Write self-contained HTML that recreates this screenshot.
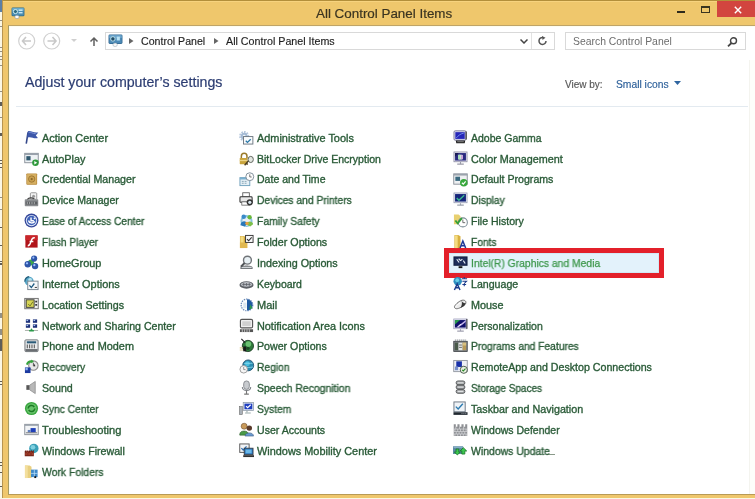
<!DOCTYPE html>
<html><head><meta charset="utf-8"><style>
*{margin:0;padding:0;box-sizing:border-box}
html,body{width:755px;height:499px;overflow:hidden;background:#fbf7e4;font-family:"Liberation Sans",sans-serif}
.a,.it{will-change:transform}
.a{position:absolute}
#frame{position:absolute;left:2px;top:0;width:760px;height:498px;background:#efc76c;border-left:1px solid #b8954f;border-top:1px solid #b38f3a}
#content{position:absolute;left:8px;top:25px;width:760px;height:470px;background:#fff;border-left:1px solid #a59a62;border-top:1px solid #bfa468;border-bottom:1px solid #b89a55}
.it{position:absolute;font-size:10.5px;line-height:12px;color:#27542f;white-space:nowrap;-webkit-text-stroke:0.35px #2f6240}
.hl{color:#3a9448;-webkit-text-stroke:0.25px #3f9a4c}
.ic{position:absolute;overflow:visible}
</style></head><body>
<div id="frame"></div><div class="a" style="left:3px;top:1px;width:752px;height:1px;background:#f7d37e"></div>
<div class="a" style="left:0;top:0;width:2px;height:12px;background:#5b7fa6"></div>
<div class="a" style="left:0px;top:20px;width:2px;height:1px;background:#2a2a2a;opacity:.5"></div><div class="a" style="left:0px;top:25.5px;width:2px;height:1px;background:#2a2a2a;opacity:.5"></div><div class="a" style="left:0px;top:47px;width:2px;height:1px;background:#2a2a2a;opacity:.5"></div><div class="a" style="left:0px;top:50.5px;width:2px;height:1px;background:#2a2a2a;opacity:.5"></div><div class="a" style="left:0px;top:55.5px;width:2px;height:1px;background:#2a2a2a;opacity:.5"></div><div class="a" style="left:0px;top:58.5px;width:2px;height:1px;background:#2a2a2a;opacity:.5"></div><div class="a" style="left:0px;top:64.5px;width:2px;height:1px;background:#2a2a2a;opacity:.5"></div><div class="a" style="left:0px;top:91px;width:2px;height:1px;background:#2a2a2a;opacity:.5"></div><div class="a" style="left:0px;top:102px;width:2px;height:4px;background:#2a2a2a;opacity:.75"></div><div class="a" style="left:0px;top:117px;width:2px;height:1px;background:#2a2a2a;opacity:.5"></div><div class="a" style="left:0px;top:133px;width:2px;height:3px;background:#2a2a2a;opacity:.75"></div><div class="a" style="left:0px;top:160px;width:2px;height:1px;background:#2a2a2a;opacity:.75"></div><div class="a" style="left:0px;top:163px;width:2px;height:1px;background:#2a2a2a;opacity:.75"></div><div class="a" style="left:0px;top:167px;width:2px;height:1px;background:#2a2a2a;opacity:.75"></div><div class="a" style="left:0px;top:197px;width:2px;height:1px;background:#2a2a2a;opacity:.5"></div><div class="a" style="left:0px;top:209px;width:2px;height:1px;background:#2a2a2a;opacity:.5"></div><div class="a" style="left:0px;top:227px;width:2px;height:1px;background:#2a2a2a;opacity:.75"></div><div class="a" style="left:0px;top:244.5px;width:2px;height:1px;background:#2a2a2a;opacity:.75"></div><div class="a" style="left:0px;top:261px;width:2px;height:1px;background:#2a2a2a;opacity:.75"></div><div class="a" style="left:0px;top:262.7px;width:2px;height:1px;background:#2a2a2a;opacity:.75"></div><div class="a" style="left:0px;top:264.3px;width:2px;height:1px;background:#2a2a2a;opacity:.75"></div><div class="a" style="left:0px;top:312.5px;width:2px;height:5px;background:#2a2a2a;opacity:.5"></div><div class="a" style="left:0px;top:329px;width:2px;height:6px;background:#2a2a2a;opacity:.5"></div><div class="a" style="left:0px;top:339px;width:2px;height:12px;background:#2a2a2a;opacity:.75"></div><div class="a" style="left:0px;top:381px;width:2px;height:1px;background:#2a2a2a;opacity:.75"></div><div class="a" style="left:0px;top:384px;width:2px;height:1px;background:#2a2a2a;opacity:.75"></div><div class="a" style="left:0px;top:462px;width:2px;height:1px;background:#2a2a2a;opacity:.75"></div><div class="a" style="left:0px;top:465px;width:2px;height:1px;background:#2a2a2a;opacity:.75"></div><div class="a" style="left:0px;top:471.5px;width:2px;height:1px;background:#2a2a2a;opacity:.75"></div><div class="a" style="left:0px;top:485.5px;width:2px;height:1px;background:#2a2a2a;opacity:.75"></div>
<!-- title bar -->
<svg class="a" style="left:11px;top:7px" width="14" height="12" viewBox="0 0 16 14"><rect x="0.5" y="0.5" width="15" height="10.2" rx="1.5" fill="#2f6a88"/><rect x="1.3" y="1.3" width="13.4" height="8.6" rx="0.8" fill="#4a8eb4"/><rect x="1.3" y="1.3" width="13.4" height="3" fill="#6aaccc"/><circle cx="5" cy="5.3" r="2.4" fill="#2a6a80" stroke="#d4f0f4" stroke-width="1.1"/><rect x="8.8" y="3" width="4.5" height="1.4" fill="#e0f6fc"/><rect x="8.8" y="6" width="4.5" height="1.4" fill="#e0f6fc"/><ellipse cx="6.8" cy="11.6" rx="2.6" ry="2" fill="#fafafa" stroke="#7a8a96" stroke-width="0.6"/></svg>
<div class="a" style="left:315.5px;top:5.8px;font-size:13.4px;line-height:16px;color:#3b3420;white-space:nowrap;-webkit-text-stroke:0.2px #3b3420">All Control Panel Items</div>
<div class="a" style="left:677px;top:11px;width:8px;height:1.6px;background:#2e2a1c"></div>
<div class="a" style="left:701px;top:6px;width:9px;height:7px;border:1px solid #3a3420;border-top-width:2px"></div>
<div class="a" style="left:717px;top:1px;width:45px;height:16px;background:#d2453f"></div>
<svg class="a" style="left:733.5px;top:6px" width="8" height="8" viewBox="0 0 8 8"><path d="M0.8 0.8L7.2 7.2M7.2 0.8L0.8 7.2" stroke="#fff" stroke-width="1.4"/></svg>
<div id="content"></div><div class="a" style="left:9px;top:26px;width:746px;height:1px;background:#fdfdf0"></div><div class="a" style="left:9px;top:26px;width:1px;height:467px;background:#fcfdf2"></div>
<!-- nav -->
<svg class="a" style="left:18px;top:32px" width="18" height="18" viewBox="0 0 18 18"><circle cx="8.7" cy="9" r="8" fill="none" stroke="#d0d0d0" stroke-width="1.2"/><path d="M4.5 9H13M8 5L4.5 9L8 13" fill="none" stroke="#c8c8c8" stroke-width="1.6"/></svg>
<svg class="a" style="left:43px;top:32px" width="18" height="18" viewBox="0 0 18 18"><circle cx="8.7" cy="9" r="8" fill="none" stroke="#d0d0d0" stroke-width="1.2"/><path d="M4.5 9H13M9.5 5L13 9L9.5 13" fill="none" stroke="#c8c8c8" stroke-width="1.6"/></svg>
<svg class="a" style="left:71px;top:39px" width="6" height="4" viewBox="0 0 6 4"><path d="M0 0H6L3 3Z" fill="#cfcfcf"/></svg>
<svg class="a" style="left:89px;top:36px" width="10" height="11" viewBox="0 0 10 11"><path d="M5 10V2M1.5 5.5L5 2L8.5 5.5" fill="none" stroke="#606060" stroke-width="1.5"/></svg>
<div class="a" style="left:105px;top:32px;width:450px;height:18px;border:1px solid #d9d9d9;background:#fff"></div>
<div class="a" style="left:531px;top:33px;width:1px;height:16px;background:#e2e2e2"></div>
<svg class="a" style="left:107.5px;top:34px" width="15" height="13" viewBox="0 0 16 14"><rect x="0.5" y="0.5" width="15" height="10.2" rx="1.5" fill="#2f6690"/><rect x="1.3" y="1.3" width="13.4" height="8.6" rx="0.8" fill="#4d8ab6"/><rect x="1.3" y="1.3" width="13.4" height="3" fill="#6aa4cc"/><circle cx="5.2" cy="5.3" r="2.4" fill="#1f4c68" stroke="#c4e6ee" stroke-width="1"/><rect x="9.3" y="2.8" width="3.4" height="4.2" fill="#b8e2f4"/><ellipse cx="7.6" cy="11.6" rx="2.4" ry="1.9" fill="#fafafa" stroke="#8a9aa6" stroke-width="0.5"/></svg>
<svg class="a" style="left:129px;top:38px" width="5" height="6" viewBox="0 0 5 6"><path d="M0 0L4.5 3L0 6Z" fill="#666"/></svg>
<div class="a" style="left:141px;top:35.2px;font-size:10.6px;line-height:12px;color:#1e1e1e;white-space:nowrap;-webkit-text-stroke:0.15px #1e1e1e">Control Panel</div>
<svg class="a" style="left:214px;top:38px" width="5" height="6" viewBox="0 0 5 6"><path d="M0 0L4.5 3L0 6Z" fill="#666"/></svg>
<div class="a" style="left:226px;top:35.2px;font-size:10.7px;line-height:12px;color:#1e1e1e;white-space:nowrap;-webkit-text-stroke:0.15px #1e1e1e">All Control Panel Items</div>
<svg class="a" style="left:520px;top:39px" width="8" height="5" viewBox="0 0 8 5"><path d="M0.5 0.5L4 4L7.5 0.5" fill="none" stroke="#444" stroke-width="1.5"/></svg>
<svg class="a" style="left:538px;top:36px" width="10" height="10" viewBox="0 0 10 10"><path d="M8 5A3.5 3.5 0 1 1 5 1.5" fill="none" stroke="#555" stroke-width="1.5"/><path d="M4 0L7.5 1.8L4.5 4Z" fill="#555"/></svg>
<div class="a" style="left:565px;top:32px;width:181px;height:18px;border:1px solid #d9d9d9;background:#fff"></div>
<div class="a" style="left:573px;top:36px;font-size:10.4px;line-height:12px;color:#6d6d6d;white-space:nowrap">Search Control Panel</div>
<svg class="a" style="left:727px;top:37px" width="11" height="10" viewBox="0 0 11 10"><circle cx="6.5" cy="3.8" r="3" fill="none" stroke="#444" stroke-width="1.4"/><path d="M4.5 6L1 9.3" stroke="#444" stroke-width="1.8"/></svg>
<!-- heading -->
<div class="a" style="left:24.5px;top:73.9px;font-size:14.2px;line-height:17px;color:#2c3d72;white-space:nowrap;-webkit-text-stroke:0.2px #2c3d72">Adjust your computer’s settings</div>
<div class="a" style="left:564.5px;top:78.5px;font-size:10px;line-height:12px;color:#585858;white-space:nowrap;-webkit-text-stroke:0.15px #585858">View by:</div>
<div class="a" style="left:615.5px;top:78.5px;font-size:10.3px;line-height:12px;color:#2d609a;white-space:nowrap;-webkit-text-stroke:0.15px #2d609a">Small icons</div>
<svg class="a" style="left:674px;top:81px" width="7" height="4" viewBox="0 0 7 4"><path d="M0 0H7L3.5 4Z" fill="#2f65a0"/></svg>
<div class="a" style="left:16px;top:106px;width:732px;height:1px;background:#e3eaf0"></div><div class="a" style="left:749px;top:60px;width:6px;height:434px;background:#fdfdfa"></div><div class="a" style="left:749px;top:60px;width:1px;height:434px;background:#f4f4ef"></div>
<div class="a uline" style="left:547px;top:454px;width:8px;height:1px;background:#8a9a8a"></div>
<!-- highlight -->
<div class="a" style="left:444px;top:248px;width:220px;height:30px;border:5px solid #e3202a;background:#e3f2fb"><div style="position:absolute;left:0;top:0;right:0;bottom:0;border:1px solid #d2e8f5"></div></div>
<div class="it" style="left:42.4px;top:131.76px;transform:scaleX(1.0386);transform-origin:0 0">Action Center</div><svg class="ic" style="left:24.4px;top:129.80px" width="15" height="15" viewBox="0 0 16 16"><path d="M4.3 2.5L2.4 14.5" stroke="#34488a" stroke-width="1.7" fill="none"/><path d="M4 1.5C7 0 9.5 3.5 15.2 2.6L12.6 5.8L14.8 8.6C10 9.6 7.5 6.4 3.5 8.2Z" fill="#3d58aa"/><path d="M5 2.5C7 1.7 9 3.9 12.5 3.9" stroke="#8aa0e0" stroke-width="0.8" fill="none"/></svg><div class="it" style="left:42.4px;top:152.62px;transform:scaleX(1.0341);transform-origin:0 0">AutoPlay</div><svg class="ic" style="left:24.4px;top:150.66px" width="15" height="15" viewBox="0 0 16 16"><rect x="0.8" y="2.5" width="14.4" height="10" fill="#eef2f5" stroke="#8a9099"/><rect x="0.8" y="2.5" width="14.4" height="1.8" fill="#9aa2ac"/><rect x="2.5" y="5.5" width="4.5" height="4.5" fill="#30586e"/><circle cx="12.2" cy="12.5" r="3.5" fill="#2f9a3c"/><path d="M11 10.6L14 12.5L11 14.4Z" fill="#fff"/></svg><div class="it" style="left:42.4px;top:173.48px;transform:scaleX(1.0132);transform-origin:0 0">Credential Manager</div><svg class="ic" style="left:24.4px;top:171.52px" width="15" height="15" viewBox="0 0 16 16"><rect x="2.5" y="1.5" width="11.5" height="12" rx="1" fill="#b8893a"/><rect x="3.3" y="2.3" width="9.9" height="10.4" fill="#d6b063"/><circle cx="8.2" cy="7.5" r="3.4" fill="#c9a050" stroke="#946c2a" stroke-width="0.8"/><circle cx="8.2" cy="7.5" r="1.2" fill="#8a6528"/></svg><div class="it" style="left:42.4px;top:194.34px;transform:scaleX(1.0053);transform-origin:0 0">Device Manager</div><svg class="ic" style="left:24.4px;top:192.38px" width="15" height="15" viewBox="0 0 16 16"><rect x="6.8" y="0.8" width="6.8" height="7" rx="1" fill="#f2f2f2" stroke="#8a8a8a" stroke-width="0.9"/><circle cx="10.2" cy="4.5" r="1.6" fill="#9a9a9a"/><path d="M3.5 8.5C4.5 6 8.5 5.5 11 7.5" stroke="#444" stroke-width="1.5" fill="none"/><rect x="0.8" y="7.8" width="14.4" height="7.4" rx="0.8" fill="#8a8d90"/><rect x="1.8" y="10.2" width="12.4" height="3.2" fill="#5c5f62"/><path d="M3.5 10.5V13M6 10.5V13M8.5 10.5V13M11 10.5V13" stroke="#b8babc" stroke-width="0.9"/></svg><div class="it" style="left:42.4px;top:215.20px;transform:scaleX(0.9638);transform-origin:0 0">Ease of Access Center</div><svg class="ic" style="left:24.4px;top:213.24px" width="15" height="15" viewBox="0 0 16 16"><circle cx="8" cy="8" r="7.4" fill="#34479a"/><circle cx="8" cy="8" r="6" fill="#dfe8f8"/><circle cx="8" cy="8" r="5" fill="#3f62b8"/><path d="M4.8 8C5.5 11 9.5 11.5 11.5 9M7.5 4.8V8.2H10.5M10.5 5L12 6.5" stroke="#fff" stroke-width="1.5" fill="none"/></svg><div class="it" style="left:42.4px;top:236.06px;transform:scaleX(0.9597);transform-origin:0 0">Flash Player</div><svg class="ic" style="left:24.4px;top:234.10px" width="15" height="15" viewBox="0 0 16 16"><rect x="1.5" y="1.5" width="13" height="13" fill="#b0141a"/><rect x="1.5" y="1.5" width="13" height="5" fill="#c9262a"/><path d="M11.5 4C8.5 3.5 8 6 7.3 8.5S5.5 12.5 4 12.5M6 8H10" stroke="#fff" stroke-width="1.5" fill="none"/></svg><div class="it" style="left:42.4px;top:256.92px;transform:scaleX(1.0374);transform-origin:0 0">HomeGroup</div><svg class="ic" style="left:24.4px;top:254.96px" width="15" height="15" viewBox="0 0 16 16"><circle cx="7.5" cy="8" r="3.2" fill="#3aa64a"/><circle cx="10.8" cy="3.8" r="3.3" fill="#2d55a8"/><circle cx="4" cy="9.8" r="3.4" fill="#2d55a8"/><circle cx="11.8" cy="11.8" r="3.4" fill="#2d55a8"/><circle cx="3.2" cy="8.8" r="1.2" fill="#9cc0ff"/><circle cx="11" cy="10.8" r="1.2" fill="#9cc0ff"/><circle cx="10" cy="2.8" r="1.1" fill="#9cc0ff"/></svg><div class="it" style="left:42.4px;top:277.78px;transform:scaleX(1.0410);transform-origin:0 0">Internet Options</div><svg class="ic" style="left:24.4px;top:275.82px" width="15" height="15" viewBox="0 0 16 16"><circle cx="5.5" cy="5.5" r="4.8" fill="#5aa8c8"/><path d="M1 6A4.8 4.8 0 0 1 5.5 0.7" stroke="#1f5a78" stroke-width="1.3" fill="none"/><circle cx="6.5" cy="4" r="2" fill="#b8e4f0"/><rect x="4" y="5.5" width="11" height="9" fill="#f6f8fa" stroke="#7a8690" stroke-width="1"/><path d="M5.8 10L7.8 12.3L11 8" stroke="#1f5a80" stroke-width="1.4" fill="none"/><path d="M11.5 12.2H13.8" stroke="#333" stroke-width="1"/></svg><div class="it" style="left:42.4px;top:298.64px;transform:scaleX(1.0190);transform-origin:0 0">Location Settings</div><svg class="ic" style="left:24.4px;top:296.68px" width="15" height="15" viewBox="0 0 16 16"><rect x="0.8" y="1.5" width="14.4" height="11" fill="#f0f0f0" stroke="#707070"/><rect x="2.3" y="3" width="8.5" height="8" fill="#d6d456" stroke="#2a2a2a" stroke-width="0.9"/><path d="M4.5 7.5L6.5 9.5L9.5 5" stroke="#6a7020" stroke-width="1" fill="none"/><rect x="12" y="4" width="2" height="1.8" fill="#333"/><rect x="12" y="7.5" width="2" height="1.8" fill="#333"/></svg><div class="it" style="left:42.4px;top:319.50px;transform:scaleX(1.0092);transform-origin:0 0">Network and Sharing Center</div><svg class="ic" style="left:24.4px;top:317.54px" width="15" height="15" viewBox="0 0 16 16"><rect x="2" y="1.5" width="4.5" height="3.6" fill="#1a2e78"/><rect x="9.5" y="1.5" width="4.5" height="3.6" fill="#1a2e78"/><rect x="2" y="6.8" width="4.5" height="3.6" fill="#1a2e78"/><rect x="9.5" y="6.8" width="4.5" height="3.6" fill="#1a2e78"/><rect x="2.6" y="2" width="1.8" height="1.3" fill="#a8c4f0"/><rect x="10.1" y="2" width="1.8" height="1.3" fill="#a8c4f0"/><rect x="2.6" y="7.3" width="1.8" height="1.3" fill="#a8c4f0"/><rect x="10.1" y="7.3" width="1.8" height="1.3" fill="#a8c4f0"/><path d="M1 13.3H15" stroke="#a8b0a8" stroke-width="1"/><path d="M6 13.8L8 10.8L10 13.8Z" fill="#2a9a4a"/><rect x="5.5" y="12.8" width="5" height="1.6" fill="#2a9a4a"/></svg><div class="it" style="left:42.4px;top:340.36px;transform:scaleX(1.0367);transform-origin:0 0">Phone and Modem</div><svg class="ic" style="left:24.4px;top:338.40px" width="15" height="15" viewBox="0 0 16 16"><rect x="1" y="2" width="14" height="12.5" rx="1" fill="#e8eaec" stroke="#6a6e72" stroke-width="1"/><rect x="3" y="3.5" width="10" height="2.2" fill="#2a5a78"/><path d="M3.5 7V11M6 7V11M8.5 7V11M11 7V11" stroke="#555" stroke-width="1.1"/><rect x="1.5" y="11.8" width="13" height="2.2" fill="#6a6e72"/></svg><div class="it" style="left:42.4px;top:361.22px;transform:scaleX(0.9745);transform-origin:0 0">Recovery</div><svg class="ic" style="left:24.4px;top:359.26px" width="15" height="15" viewBox="0 0 16 16"><circle cx="10" cy="7" r="5" fill="#e8e8e8" stroke="#8b8b8b" stroke-width="1.2"/><path d="M10 4V7.5H12" stroke="#666" stroke-width="1"/><path d="M3 6C4 3 6.5 2 9 2.5" stroke="#36a33c" stroke-width="2" fill="none"/><path d="M8 0.5L10.5 2.8L7.5 4.5Z" fill="#36a33c"/><rect x="1" y="9" width="6" height="6" fill="#1c3aa0"/><rect x="1.5" y="9.5" width="2.5" height="2.5" fill="#8fb0f0"/></svg><div class="it" style="left:42.4px;top:382.08px;transform:scaleX(1.0137);transform-origin:0 0">Sound</div><svg class="ic" style="left:24.4px;top:380.12px" width="15" height="15" viewBox="0 0 16 16"><rect x="2.5" y="5.5" width="3.5" height="5" fill="#585858"/><path d="M6 5.5L12 1.5V14.5L6 10.5Z" fill="#b8b8b8" stroke="#7e7e7e" stroke-width="0.7"/></svg><div class="it" style="left:42.4px;top:402.94px;transform:scaleX(0.9790);transform-origin:0 0">Sync Center</div><svg class="ic" style="left:24.4px;top:400.98px" width="15" height="15" viewBox="0 0 16 16"><circle cx="8" cy="8" r="7" fill="#39a53f"/><circle cx="8" cy="8" r="5.5" fill="#67c46a"/><path d="M4.5 8A3.5 3.5 0 0 1 11 6.5M11.5 8A3.5 3.5 0 0 1 5 9.5" stroke="#1d7a25" stroke-width="1.6" fill="none"/></svg><div class="it" style="left:42.4px;top:423.80px;transform:scaleX(1.0600);transform-origin:0 0">Troubleshooting</div><svg class="ic" style="left:24.4px;top:421.84px" width="15" height="15" viewBox="0 0 16 16"><rect x="0.8" y="2.5" width="14.4" height="11" fill="#f2f4f6" stroke="#8a9099"/><rect x="0.8" y="2.5" width="14.4" height="1.6" fill="#9aa2ac"/><rect x="7" y="6.5" width="5.5" height="4.5" fill="#2040b8"/><rect x="4" y="8.5" width="3" height="2.5" fill="#6080c0"/><path d="M2 11.5H14" stroke="#555" stroke-width="0.8"/></svg><div class="it" style="left:42.4px;top:444.66px;transform:scaleX(1.0137);transform-origin:0 0">Windows Firewall</div><svg class="ic" style="left:24.4px;top:442.70px" width="15" height="15" viewBox="0 0 16 16"><circle cx="10.5" cy="5.8" r="5" fill="#3aa0b8"/><circle cx="9.5" cy="4.5" r="2.5" fill="#7fd0e0"/><path d="M0.8 8.5L2.5 7.5V9L4.5 7.5V9L6.5 7.5V9L8.5 7.5V9L10.5 7.5V14.2H0.8Z" fill="#6e1f14"/><path d="M1 10.8H10.5M1 12.6H10.5M3.5 9.2V10.8M7.5 9.2V10.8M2.3 10.8V12.6M5.5 10.8V12.6M9 10.8V12.6" stroke="#c0523a" stroke-width="0.6"/></svg><div class="it" style="left:42.4px;top:465.52px;transform:scaleX(0.9885);transform-origin:0 0">Work Folders</div><svg class="ic" style="left:24.4px;top:463.56px" width="15" height="15" viewBox="0 0 16 16"><path d="M1 1.5H6L8 3V15H1Z" fill="#e8cf80"/><path d="M1 1.5H4V15H1Z" fill="#f3df9e"/><rect x="7.5" y="6" width="7" height="8" fill="#3d88c8"/><path d="M11 6V14M7.5 10H14.5" stroke="#bfe0f8" stroke-width="0.8"/><rect x="11" y="13" width="2" height="2" fill="#111"/></svg><div class="it" style="left:256.6px;top:131.76px;transform:scaleX(1.0398);transform-origin:0 0">Administrative Tools</div><svg class="ic" style="left:238.6px;top:129.80px" width="15" height="15" viewBox="0 0 16 16"><circle cx="5.5" cy="6.5" r="4.3" fill="none" stroke="#b4c6dc" stroke-width="2.2" stroke-dasharray="1.7 1.1"/><circle cx="5.5" cy="6.5" r="3.6" fill="#a4bad4"/><circle cx="5.5" cy="6.5" r="1.5" fill="#eef4fa"/><rect x="4.8" y="7" width="10" height="8" fill="#fafcfd" stroke="#6c7680" stroke-width="1"/><path d="M7.2 11.5L9 13.2L12.5 9.8" stroke="#2a78a8" stroke-width="1.4" fill="none"/></svg><div class="it" style="left:256.6px;top:152.62px;transform:scaleX(1.0016);transform-origin:0 0">BitLocker Drive Encryption</div><svg class="ic" style="left:238.6px;top:150.66px" width="15" height="15" viewBox="0 0 16 16"><path d="M2.5 8V5.5A3 3 0 0 1 8.5 5.5V8" stroke="#9a7a2a" stroke-width="1.6" fill="none"/><rect x="0.8" y="7.5" width="8.2" height="6.5" rx="0.5" fill="#c9a43c"/><rect x="0.8" y="9.5" width="8.2" height="1.3" fill="#ecd488"/><ellipse cx="12.5" cy="9" rx="2.8" ry="3.3" fill="#e2e6e0" stroke="#5a6058" stroke-width="1"/><path d="M10 10.5L6 15.2M7.8 13L9.3 14.5" stroke="#4a3c20" stroke-width="1.5"/></svg><div class="it" style="left:256.6px;top:173.48px;transform:scaleX(1.0029);transform-origin:0 0">Date and Time</div><svg class="ic" style="left:238.6px;top:171.52px" width="15" height="15" viewBox="0 0 16 16"><rect x="1" y="6" width="10.5" height="8.5" fill="#e6f0f6" stroke="#6fa0bc"/><rect x="1" y="6" width="10.5" height="2" fill="#7ab0d0"/><path d="M3 10H5M6 10H8M3 12H5M6 12H8" stroke="#7a9aac" stroke-width="0.9"/><circle cx="11.5" cy="5" r="4.2" fill="#fff" stroke="#7a8a96" stroke-width="1"/><path d="M11.5 2.5V5.3H13.5" stroke="#555" stroke-width="0.9" fill="none"/></svg><div class="it" style="left:256.6px;top:194.34px;transform:scaleX(0.9791);transform-origin:0 0">Devices and Printers</div><svg class="ic" style="left:238.6px;top:192.38px" width="15" height="15" viewBox="0 0 16 16"><rect x="4" y="0.8" width="7" height="4.5" fill="#fff" stroke="#555" stroke-width="0.9"/><rect x="1" y="5" width="13" height="6" rx="1" fill="#e8e8e8" stroke="#333" stroke-width="1.1"/><rect x="3" y="10.5" width="8" height="3.5" fill="#fff" stroke="#555" stroke-width="0.8"/><circle cx="11.5" cy="11" r="3.3" fill="#333"/><circle cx="11.5" cy="11" r="1.7" fill="#d8e4ec"/></svg><div class="it" style="left:256.6px;top:215.20px;transform:scaleX(0.9857);transform-origin:0 0">Family Safety</div><svg class="ic" style="left:238.6px;top:213.24px" width="15" height="15" viewBox="0 0 16 16"><circle cx="8" cy="8.5" r="6.5" fill="#8ac4e0"/><circle cx="8" cy="9" r="4.5" fill="#e8f0f4"/><circle cx="5" cy="4" r="2.4" fill="#3a8ac8"/><path d="M1.5 13C1.5 8 8.5 7 8.5 12L6 14.5Z" fill="#2a78b8"/><circle cx="11.3" cy="4.5" r="2.3" fill="#6ab83a"/><path d="M8 12.5C8 8 15 8 15 12L12 14.5Z" fill="#7cc04a"/><circle cx="8.5" cy="11" r="1.8" fill="#e8a040"/></svg><div class="it" style="left:256.6px;top:236.06px;transform:scaleX(1.0191);transform-origin:0 0">Folder Options</div><svg class="ic" style="left:238.6px;top:234.10px" width="15" height="15" viewBox="0 0 16 16"><path d="M1 2H5.5L7.5 4V15H1Z" fill="#d4aa40"/><path d="M1.5 2.6H5V15H1.5Z" fill="#f4dc80"/><path d="M1 9H9V15H1Z" fill="#e0b850"/><rect x="7" y="1.5" width="8" height="7.5" fill="#f8f8f8" stroke="#333" stroke-width="1"/><path d="M8.5 5.5L10.3 7.2L13.5 3.5" stroke="#333" stroke-width="1.2" fill="none"/></svg><div class="it" style="left:256.6px;top:256.92px;transform:scaleX(1.0244);transform-origin:0 0">Indexing Options</div><svg class="ic" style="left:238.6px;top:254.96px" width="15" height="15" viewBox="0 0 16 16"><path d="M1.5 13.5C1.5 10.5 14.5 10.5 14.5 13.5V15H1.5Z" fill="#6a6e72"/><rect x="2.5" y="12.5" width="11" height="1.5" fill="#d0d4d8"/><circle cx="9" cy="5.5" r="4.2" fill="#e8f0f4" stroke="#707478" stroke-width="1.5"/><path d="M6 8.5L2 12.5" stroke="#505458" stroke-width="2"/></svg><div class="it" style="left:256.6px;top:277.78px;transform:scaleX(1.0000);transform-origin:0 0">Keyboard</div><svg class="ic" style="left:238.6px;top:275.82px" width="15" height="15" viewBox="0 0 16 16"><ellipse cx="8" cy="9.5" rx="7.5" ry="4" fill="#5c6066"/><ellipse cx="8" cy="9" rx="6" ry="2.5" fill="#b8bcc2"/><path d="M3.5 9H12.5M5 7.5V10.5M8 7.5V10.5M11 7.5V10.5" stroke="#5a5e64" stroke-width="0.8"/></svg><div class="it" style="left:256.6px;top:298.64px;transform:scaleX(1.0476);transform-origin:0 0">Mail</div><svg class="ic" style="left:238.6px;top:296.68px" width="15" height="15" viewBox="0 0 16 16"><circle cx="8.5" cy="8.5" r="6.2" fill="#ffffff" stroke="#6a8ab8" stroke-width="1.3" stroke-dasharray="1.5 1"/><path d="M8.5 2.5A6 6 0 0 1 14.5 8.5A6 6 0 0 1 8.5 14.5Z" fill="#1f5aa0"/><path d="M12 8L14.5 12L11 13Z" fill="#2a9a4a"/><rect x="4.5" y="6" width="3.5" height="6" fill="#dfe8f0"/></svg><div class="it" style="left:256.6px;top:319.50px;transform:scaleX(1.0337);transform-origin:0 0">Notification Area Icons</div><svg class="ic" style="left:238.6px;top:317.54px" width="15" height="15" viewBox="0 0 16 16"><rect x="1.5" y="1.5" width="13" height="9" rx="1.5" fill="#f0f0f0" stroke="#555" stroke-width="1.2"/><rect x="3.5" y="3.5" width="9" height="5" fill="#d0d0d0"/><rect x="1" y="12" width="14" height="3" fill="#555"/><path d="M3.5 12V15M6 12V15M8.5 12V15M11 12V15" stroke="#ddd" stroke-width="0.8"/></svg><div class="it" style="left:256.6px;top:340.36px;transform:scaleX(1.0133);transform-origin:0 0">Power Options</div><svg class="ic" style="left:238.6px;top:338.40px" width="15" height="15" viewBox="0 0 16 16"><circle cx="9.5" cy="8.5" r="6" fill="#2e7a3a" stroke="#1a3a20" stroke-width="0.9"/><circle cx="10" cy="6.5" r="3" fill="#6ac070"/><path d="M0.8 10.5H4.5M0.8 12.8H4.5" stroke="#d8c890" stroke-width="1.2"/><rect x="4.5" y="9" width="3.2" height="5.2" fill="#1a1a1a"/><path d="M2.5 1L6.5 5" stroke="#222" stroke-width="1.2"/><circle cx="9.5" cy="11" r="1.8" fill="#1a4a22"/></svg><div class="it" style="left:256.6px;top:361.22px;transform:scaleX(0.9787);transform-origin:0 0">Region</div><svg class="ic" style="left:238.6px;top:359.26px" width="15" height="15" viewBox="0 0 16 16"><circle cx="9.8" cy="6.8" r="5.8" fill="#2a8cb0" stroke="#1a4a68" stroke-width="0.9"/><circle cx="9" cy="5" r="2.6" fill="#4ac0e0"/><path d="M5.5 5C7.5 4 11 5 14.5 4.5M5.5 9.5C8 8.5 11 9.5 15 8.5" stroke="#9ae0f0" stroke-width="0.8" fill="none"/><circle cx="5" cy="11" r="4" fill="#f6f6f6" stroke="#9a9a9a" stroke-width="1"/><path d="M5 8.5V11.3H7" stroke="#777" stroke-width="0.8" fill="none"/></svg><div class="it" style="left:256.6px;top:382.08px;transform:scaleX(0.9936);transform-origin:0 0">Speech Recognition</div><svg class="ic" style="left:238.6px;top:380.12px" width="15" height="15" viewBox="0 0 16 16"><rect x="5" y="1" width="6" height="9" rx="3" fill="#c8cbcf" stroke="#7c8086" stroke-width="0.9"/><path d="M3.5 7.5C3.5 12.5 12.5 12.5 12.5 7.5" stroke="#7a7e84" stroke-width="1.1" fill="none"/><path d="M8 11.5V14.5M5.5 15H10.5" stroke="#777" stroke-width="1.2"/></svg><div class="it" style="left:256.6px;top:402.94px;transform:scaleX(0.9794);transform-origin:0 0">System</div><svg class="ic" style="left:238.6px;top:400.98px" width="15" height="15" viewBox="0 0 16 16"><rect x="0.5" y="6" width="3" height="8.5" fill="#a9b0b8" stroke="#666" stroke-width="0.6"/><rect x="4.5" y="1.5" width="11" height="8.5" fill="#e8eef4" stroke="#8a98a8" stroke-width="0.8"/><rect x="5.8" y="2.8" width="8.4" height="6" fill="#1f3fc0"/><path d="M7.5 5.5L9.2 7.2L12.5 4" stroke="#fff" stroke-width="1.2" fill="none"/><path d="M8.5 10.5V12M6.5 12.8H12.5" stroke="#9aa" stroke-width="1.2"/></svg><div class="it" style="left:256.6px;top:423.80px;transform:scaleX(1.0060);transform-origin:0 0">User Accounts</div><svg class="ic" style="left:238.6px;top:421.84px" width="15" height="15" viewBox="0 0 16 16"><circle cx="5.5" cy="4.5" r="3.2" fill="#c89a5a" stroke="#6a4a2a" stroke-width="0.6"/><path d="M0.8 13C0.8 8.5 10 8.5 10 13V14H0.8Z" fill="#4a9a48" stroke="#2a5a2a" stroke-width="0.6"/><circle cx="11" cy="6.5" r="2.9" fill="#5a3a2a"/><path d="M6.5 15C6.5 10.5 15.5 10.5 15.5 15Z" fill="#6a9ad0" stroke="#3a5a80" stroke-width="0.6"/></svg><div class="it" style="left:256.6px;top:444.66px;transform:scaleX(1.0383);transform-origin:0 0">Windows Mobility Center</div><svg class="ic" style="left:238.6px;top:442.70px" width="15" height="15" viewBox="0 0 16 16"><rect x="0.8" y="1" width="10" height="9" fill="#f2f4f6" stroke="#555" stroke-width="1"/><path d="M2.5 5.5L4.5 7.5L8 3.5" stroke="#2c70b8" stroke-width="1.3" fill="none"/><rect x="5.5" y="5.5" width="9.5" height="7" fill="#2870b8" stroke="#333" stroke-width="0.8"/><rect x="7" y="7" width="6.5" height="4" fill="#6ab8e8"/><rect x="4.5" y="13" width="11.5" height="2" fill="#333"/></svg><div class="it" style="left:470.8px;top:131.76px;transform:scaleX(0.9986);transform-origin:0 0">Adobe Gamma</div><svg class="ic" style="left:452.8px;top:129.80px" width="15" height="15" viewBox="0 0 16 16"><rect x="1" y="0.8" width="13" height="10.2" rx="1.5" fill="#d4d4ec" stroke="#6a6a8a" stroke-width="0.8"/><path d="M14 1.5V10" stroke="#333" stroke-width="1.2"/><rect x="2.5" y="2.3" width="10" height="7.2" fill="#2626b8"/><path d="M3.5 8.5C5.5 6 8 4 11.5 3.3" stroke="#7a9af0" stroke-width="0.9" fill="none"/><path d="M3 11.3H13L12.5 14.2H3.5Z" fill="#222"/><rect x="4.5" y="12" width="7" height="1" fill="#888"/></svg><div class="it" style="left:470.8px;top:152.62px;transform:scaleX(1.0282);transform-origin:0 0">Color Management</div><svg class="ic" style="left:452.8px;top:150.66px" width="15" height="15" viewBox="0 0 16 16"><rect x="1" y="1" width="14" height="10.5" fill="#e0e0ee" stroke="#8a8aa0" stroke-width="0.8"/><rect x="2.2" y="2.2" width="11.6" height="8" fill="#2a2a80"/><path d="M2.2 2.2H6L2.2 6Z" fill="#1a1a50"/><rect x="5.5" y="4" width="5" height="5" rx="1" fill="#e8f4e8"/><rect x="5.5" y="4" width="2.5" height="5" fill="#a8e0b8"/><rect x="8.5" y="4.5" width="2" height="4" fill="#c8a0d8"/><path d="M8 11.8V13.2M4.5 14H11.5" stroke="#9a9aa8" stroke-width="1.2"/></svg><div class="it" style="left:470.8px;top:173.48px;transform:scaleX(1.0087);transform-origin:0 0">Default Programs</div><svg class="ic" style="left:452.8px;top:171.52px" width="15" height="15" viewBox="0 0 16 16"><rect x="0.8" y="2" width="14.4" height="11" fill="#eef0f2" stroke="#8a9099"/><rect x="0.8" y="2" width="14.4" height="1.8" fill="#9aa2ac"/><rect x="2.5" y="5" width="5" height="4.5" fill="#3a6a80"/><circle cx="11.5" cy="11.5" r="4" fill="#38a83c"/><path d="M9.5 11.5L11 13L13.5 10" stroke="#fff" stroke-width="1.3" fill="none"/></svg><div class="it" style="left:470.8px;top:194.34px;transform:scaleX(0.9792);transform-origin:0 0">Display</div><svg class="ic" style="left:452.8px;top:192.38px" width="15" height="15" viewBox="0 0 16 16"><rect x="1" y="1" width="14" height="10.5" fill="#e0e4f0" stroke="#8a90a8" stroke-width="0.7"/><rect x="2.2" y="2.2" width="11.6" height="8" fill="#15267a"/><path d="M4 6.5L6.3 8.8L12 3.5" stroke="#3ab890" stroke-width="1.6" fill="none"/><path d="M8 12V13.3M4.5 14H11.5" stroke="#9aa0ac" stroke-width="1.2"/></svg><div class="it" style="left:470.8px;top:215.20px;transform:scaleX(1.0058);transform-origin:0 0">File History</div><svg class="ic" style="left:452.8px;top:213.24px" width="15" height="15" viewBox="0 0 16 16"><path d="M1 1.5H6L8 3.5V12H1Z" fill="#e8d070"/><circle cx="10.5" cy="10" r="4.8" fill="#fff" stroke="#7a8a94" stroke-width="1.1"/><path d="M10.5 7V10.3H13" stroke="#555" stroke-width="0.9" fill="none"/><path d="M2.5 8L5 11L9.5 5.5" stroke="#34a038" stroke-width="2" fill="none"/></svg><div class="it" style="left:470.8px;top:236.06px;transform:scaleX(0.9728);transform-origin:0 0">Fonts</div><svg class="ic" style="left:452.8px;top:234.10px" width="15" height="15" viewBox="0 0 16 16"><path d="M1.5 1H5.5L8 2.5V15H1.5Z" fill="#d8b040"/><path d="M2 1.5H5V15H2Z" fill="#f4dc80"/><path d="M7.5 15L10.5 7.5L13.5 15M9 12.5H12" stroke="#1e3a9a" stroke-width="1.6" fill="none"/></svg><div class="it hl" style="left:470.8px;top:256.92px;transform:scaleX(0.9833);transform-origin:0 0">Intel(R) Graphics and Media</div><svg class="ic" style="left:452.8px;top:254.96px" width="15" height="15" viewBox="0 0 16 16"><rect x="0.5" y="1.5" width="15" height="10" fill="#0e1a3a"/><rect x="1.5" y="2.5" width="13" height="8" fill="#1e2e5a"/><path d="M4 4.5L6.5 8M6 4L8 6L10 4.5M11 6L13 9" stroke="#e8f0f8" stroke-width="1.2" fill="none"/><rect x="6" y="12" width="4" height="2" fill="#111"/></svg><div class="it" style="left:470.8px;top:277.78px;transform:scaleX(1.0109);transform-origin:0 0">Language</div><svg class="ic" style="left:452.8px;top:275.82px" width="15" height="15" viewBox="0 0 16 16"><circle cx="5" cy="5.5" r="4.5" fill="#2f8fc0"/><circle cx="4.5" cy="4.5" r="2" fill="#6ad0e8"/><path d="M1.5 15L4.5 8.5L7.5 15M2.8 12.5H6.2" stroke="#1a3a8a" stroke-width="1.5" fill="none"/><path d="M9.5 3H15M12 1V3M10 5.5H14.5L12 8M12 8V11M10 9H14" stroke="#1a3a8a" stroke-width="1.1" fill="none"/></svg><div class="it" style="left:470.8px;top:298.64px;transform:scaleX(1.0293);transform-origin:0 0">Mouse</div><svg class="ic" style="left:452.8px;top:296.68px" width="15" height="15" viewBox="0 0 16 16"><path d="M1.5 10.5C1.5 9 6 4.5 9.5 3.5C12.5 2.8 14.5 4.5 13.5 7C12.3 9.5 6 12.8 3.5 12.5C2.2 12.3 1.5 11.5 1.5 10.5Z" fill="#ececec" stroke="#5a5a5a" stroke-width="0.9"/><path d="M9 3.7C10 5.5 11 6.5 13.6 6.8C13 9 10 10.8 8 11.5C9.5 9 10 6.5 9 3.7Z" fill="#3a3a3a"/><path d="M3 10.5C4 8.5 6 7 8 6.3" stroke="#fff" stroke-width="1" fill="none"/></svg><div class="it" style="left:470.8px;top:319.50px;transform:scaleX(0.9986);transform-origin:0 0">Personalization</div><svg class="ic" style="left:452.8px;top:317.54px" width="15" height="15" viewBox="0 0 16 16"><rect x="0.8" y="1" width="14" height="10.5" fill="#e4e4f4" stroke="#9a9ab8" stroke-width="0.7"/><path d="M14.8 1V11.5" stroke="#222" stroke-width="1"/><rect x="2" y="2.2" width="11.6" height="8" fill="#10106a"/><path d="M2 2.2H7.5L2 7Z" fill="#2a9a50"/><path d="M4 9.5C7 7.5 10 5 13.6 2.2V4C11 6.5 8 8.5 5.5 10.2Z" fill="#c8b8f0"/><path d="M6 8.5L8.5 6.5" stroke="#fff" stroke-width="0.9"/><path d="M8 12V13.3M4.5 14H11.5" stroke="#a0a0b0" stroke-width="1.2"/></svg><div class="it" style="left:470.8px;top:340.36px;transform:scaleX(0.9763);transform-origin:0 0">Programs and Features</div><svg class="ic" style="left:452.8px;top:338.40px" width="15" height="15" viewBox="0 0 16 16"><path d="M2 2.3H14" stroke="#9a9ea4" stroke-width="1.4" stroke-dasharray="1.5 0.7"/><rect x="0.8" y="3.5" width="14.4" height="11" fill="#7c8084" stroke="#3a3e42" stroke-width="0.8"/><rect x="2" y="5" width="3.8" height="8" fill="#4a5a4a"/><rect x="5.8" y="5" width="4.5" height="8" fill="#e4e6e4"/><path d="M6.5 7.5H9.5M6.5 10H9.5" stroke="#555" stroke-width="0.9"/><rect x="10.3" y="5" width="3.7" height="8" fill="#b89a58"/><rect x="10.3" y="5" width="3.7" height="3" fill="#d8c080"/></svg><div class="it" style="left:470.8px;top:361.22px;transform:scaleX(1.0129);transform-origin:0 0">RemoteApp and Desktop Connections</div><svg class="ic" style="left:452.8px;top:359.26px" width="15" height="15" viewBox="0 0 16 16"><rect x="0.8" y="1.5" width="14.4" height="12" fill="#eef0f4" stroke="#8a9099" stroke-width="0.9"/><rect x="3.5" y="2.5" width="6" height="6" fill="#1830a8"/><rect x="2" y="8" width="3.5" height="4" fill="#7a90c8"/><circle cx="11.5" cy="11.5" r="3.8" fill="#e8f0e0" stroke="#3a4a3a" stroke-width="0.9"/><path d="M9.8 11.5L11 12.8L13.3 10.3" stroke="#2a8a2a" stroke-width="1.2" fill="none"/></svg><div class="it" style="left:470.8px;top:382.08px;transform:scaleX(0.9498);transform-origin:0 0">Storage Spaces</div><svg class="ic" style="left:452.8px;top:380.12px" width="15" height="15" viewBox="0 0 16 16"><rect x="3.3" y="1" width="9.4" height="4" rx="2" fill="#a8aaac" stroke="#4a4c4e" stroke-width="0.9"/><rect x="3.3" y="5.6" width="9.4" height="4" rx="2" fill="#a8aaac" stroke="#4a4c4e" stroke-width="0.9"/><rect x="3.3" y="10.2" width="9.4" height="4" rx="2" fill="#a8aaac" stroke="#4a4c4e" stroke-width="0.9"/><path d="M5 3H11M5 7.6H11M5 12.2H11" stroke="#e8eaec" stroke-width="1"/></svg><div class="it" style="left:470.8px;top:402.94px;transform:scaleX(1.0221);transform-origin:0 0">Taskbar and Navigation</div><svg class="ic" style="left:452.8px;top:400.98px" width="15" height="15" viewBox="0 0 16 16"><rect x="1" y="1" width="12" height="10.5" fill="#eef2f6" stroke="#6a7480" stroke-width="1"/><path d="M3 6L5.5 8.5L10.5 3" stroke="#2a7ab0" stroke-width="1.5" fill="none"/><rect x="0.5" y="12" width="15" height="2.8" fill="#202830"/><path d="M9 13.4H15" stroke="#8a9098" stroke-width="1" stroke-dasharray="1.2 0.8"/></svg><div class="it" style="left:470.8px;top:423.80px;transform:scaleX(0.9989);transform-origin:0 0">Windows Defender</div><svg class="ic" style="left:452.8px;top:421.84px" width="15" height="15" viewBox="0 0 16 16"><path d="M0.8 2.5V15H15.2V2.5H13V5H11.3V2.5H9V5H7V2.5H4.7V5H3V2.5Z" fill="#8e9094"/><path d="M0.8 7.5H15.2M0.8 10.2H15.2M0.8 12.8H15.2M3 5V7.5M7 5V7.5M11.3 5V7.5M2 7.5V10.2M5 7.5V10.2M8 7.5V10.2M11 7.5V10.2M14 7.5V10.2M3.5 10.2V12.8M6.5 10.2V12.8M9.5 10.2V12.8M12.5 10.2V12.8M2 12.8V15M5 12.8V15M8 12.8V15M11 12.8V15M14 12.8V15" stroke="#dcdee0" stroke-width="0.7"/></svg><div class="it" style="left:470.8px;top:444.66px;transform:scaleX(0.9940);transform-origin:0 0">Windows Update</div><svg class="ic" style="left:452.8px;top:442.70px" width="15" height="15" viewBox="0 0 16 16"><rect x="0" y="3.5" width="10.8" height="8.2" fill="#5c8aa4"/><rect x="0.6" y="4" width="9.6" height="1.2" fill="#8cb4cc"/><path d="M1.5 9.5L4.5 6.5L7.8 9.5L6 9.5L6 12.8L3 12.8L3 9.5Z" fill="#3cc850" stroke="#1c7a28" stroke-width="0.9" transform="rotate(180 4.6 9.6)"/><path d="M7.5 8.5L11 5L14.6 8.5L12.6 8.5L12.6 11.8L9.4 11.8L9.4 8.5Z" fill="#3cc850" stroke="#1c7a28" stroke-width="0.9"/></svg>
</body></html>
